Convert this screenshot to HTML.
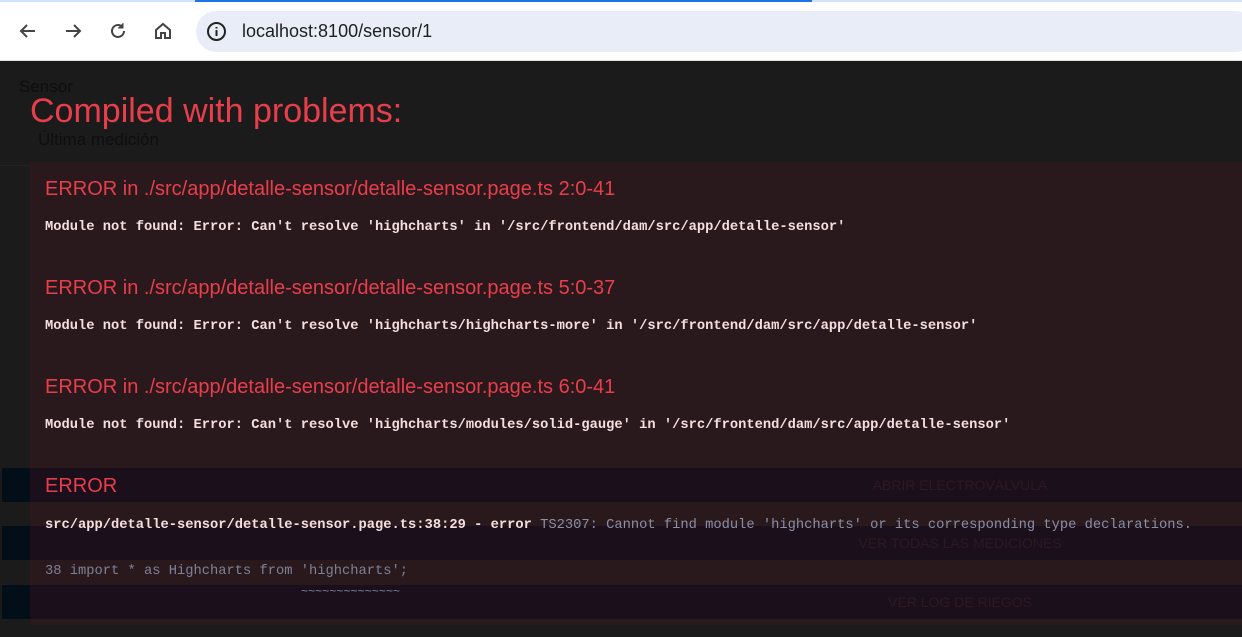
<!DOCTYPE html>
<html><head><meta charset="utf-8"><style>
*{margin:0;padding:0;box-sizing:border-box}
body{width:1242px;height:637px;overflow:hidden;background:#1b1b1b;font-family:"Liberation Sans",sans-serif;position:relative}
.chrome{position:absolute;left:0;top:0;width:1242px;height:61px;background:#fff;border-bottom:1px solid #e0e0e0}
.prog{position:absolute;left:0;top:0;height:2px;width:1242px;background:#d3e3fd}
.prog i{position:absolute;left:195px;top:0;height:2px;width:617px;background:#1a73e8}
.url{position:absolute;left:196px;top:11px;width:1060px;height:41px;border-radius:21px;background:#e9edf7}
.url span{position:absolute;left:46px;top:10px;font-size:18px;color:#1f1f1f}
.ic{position:absolute;top:20px}
.a{position:absolute;color:#0e0e0e;font-size:17px}
.hdr{position:absolute;left:0;top:61px;width:1242px;height:105px;background:#1b1b1b;border-bottom:1px solid #222}
.btn{position:absolute;left:2px;width:1240px;height:34px;background:#020e18}
.btn .in{position:absolute;left:28px;right:0;top:0;bottom:0;background:#1a0f1b}
.btn span{position:absolute;left:0;width:1916px;text-align:center;top:9px;font-size:14px;color:#2e1a1e}
.ov{position:absolute;left:30px;top:162px;width:1212px;height:463px;background:#2a191c}
.red{position:absolute;color:#e83e4c;font-size:20px;left:45px}
.mono{position:absolute;left:45px;font-family:"Liberation Mono",monospace;font-size:13.75px;font-weight:bold;color:#f5dede;white-space:pre}
</style></head><body>
<div class="chrome"><div class="prog"><i></i></div>
<svg class="ic" style="left:17px" width="22" height="22" viewBox="0 0 22 22"><path d="M18 11H4M10 5l-6 6 6 6" stroke="#444" stroke-width="2" fill="none"/></svg>
<svg class="ic" style="left:62px" width="22" height="22" viewBox="0 0 22 22"><path d="M4 11h14M12 5l6 6-6 6" stroke="#444" stroke-width="2" fill="none"/></svg>
<svg class="ic" style="left:107px" width="22" height="22" viewBox="0 0 22 22"><path d="M17 11a6 6 0 1 1-2-4.5" stroke="#444" stroke-width="2" fill="none"/><path d="M16 3v5h-5" fill="#444" stroke="#444" stroke-width="1"/></svg>
<svg class="ic" style="left:152px" width="22" height="22" viewBox="0 0 22 22"><path d="M4 10l7-6 7 6v8h-5v-5h-4v5H4z" stroke="#444" stroke-width="2" fill="none"/></svg>
<div class="url"><svg style="position:absolute;left:10px;top:10px" width="21" height="21" viewBox="0 0 21 21"><circle cx="10.5" cy="10.5" r="8.5" stroke="#222" stroke-width="2" fill="none"/><path d="M10.5 9v6M10.5 6v1.5" stroke="#222" stroke-width="2"/></svg><span>localhost:8100/sensor/1</span></div>
</div>
<div class="hdr"><div class="a" style="left:19px;top:16px">Sensor</div><div class="a" style="left:38px;top:69px">Última medición</div></div>
<div class="ov"></div>
<div class="btn" style="top:468px"><div class="in"></div><span>ABRIR ELECTROVÁLVULA</span></div>
<div class="btn" style="top:526px"><div class="in"></div><span>VER TODAS LAS MEDICIONES</span></div>
<div class="btn" style="top:585px"><div class="in"></div><span>VER LOG DE RIEGOS</span></div>
<div style="position:absolute;left:30px;top:92px;font-size:34px;color:#e83e4c">Compiled with problems:</div>
<div class="red" style="top:178px">ERROR in ./src/app/detalle-sensor/detalle-sensor.page.ts 2:0-41</div>
<div class="mono" style="top:220px">Module not found: Error: Can't resolve 'highcharts' in '/src/frontend/dam/src/app/detalle-sensor'</div>
<div class="red" style="top:277px">ERROR in ./src/app/detalle-sensor/detalle-sensor.page.ts 5:0-37</div>
<div class="mono" style="top:319px">Module not found: Error: Can't resolve 'highcharts/highcharts-more' in '/src/frontend/dam/src/app/detalle-sensor'</div>
<div class="red" style="top:376px">ERROR in ./src/app/detalle-sensor/detalle-sensor.page.ts 6:0-41</div>
<div class="mono" style="top:418px">Module not found: Error: Can't resolve 'highcharts/modules/solid-gauge' in '/src/frontend/dam/src/app/detalle-sensor'</div>
<div class="red" style="top:475px">ERROR</div>
<div class="mono" style="top:518px">src/app/detalle-sensor/detalle-sensor.page.ts:38:29 - error <span style="font-weight:normal;color:#8a8fa8">TS2307: Cannot find module 'highcharts' or its corresponding type declarations.</span></div>
<div class="mono" style="top:564px;font-weight:normal;color:#7d8199">38 import * as Highcharts from 'highcharts';</div>
<div class="mono" style="top:585px;left:301px;font-weight:normal;color:#7d8199;font-size:11.8px;letter-spacing:0">~~~~~~~~~~~~~~</div>
</body></html>
